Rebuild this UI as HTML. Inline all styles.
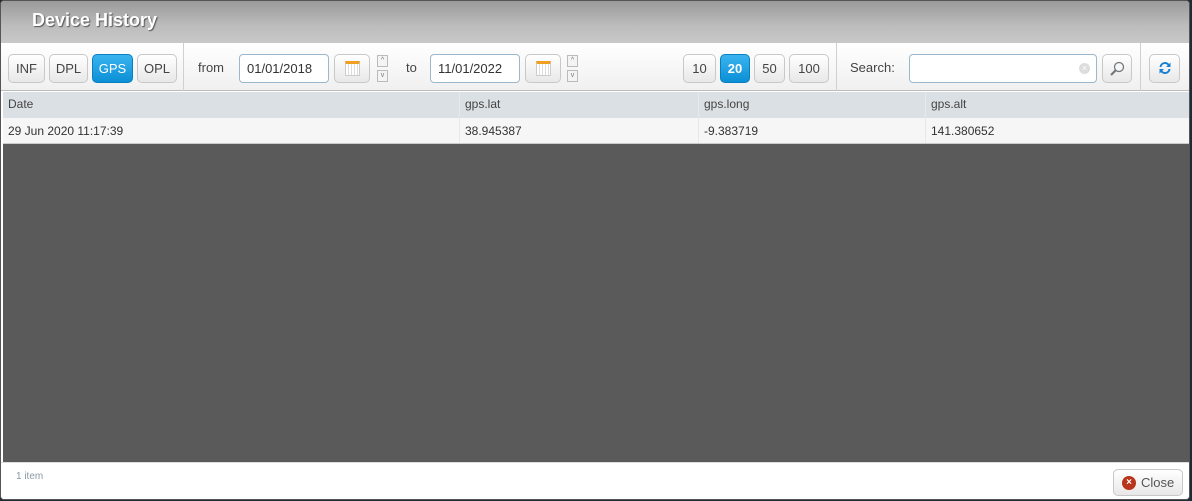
<!DOCTYPE html>
<html><head><style>
*{box-sizing:border-box;margin:0;padding:0}
body{width:1192px;height:501px;background:#1e2a36;font-family:"Liberation Sans",sans-serif;font-size:12px;color:#333;overflow:hidden;position:relative}
.win{position:absolute;left:0;top:0;width:1190px;height:500px;background:#fff;border-radius:4px;overflow:hidden;border:1px solid #555}
.title{height:42px;background:linear-gradient(#9a9a9a,#bdbdbd 60%,#c8c8c8);color:#fff;font-weight:bold;font-size:18px;padding:9px 0 0 31px;text-shadow:1px 1px 1px #555}
.tb{position:absolute;top:42px;left:0;width:1190px;height:48px;background:linear-gradient(#fff,#f0f0f0);border-bottom:1px solid #bbb}
.b{position:absolute;top:11px;height:29px;border:1px solid #c8c8c8;border-radius:5px;background:linear-gradient(#fff,#e8e8e8);text-align:center;line-height:27px;font-size:13px;color:#444}
.on{background:linear-gradient(#3bb4f0,#0b8fd6);color:#fff;border-color:#0a7fc0;font-weight:bold}
.sep{position:absolute;top:0;width:1px;height:48px;background:#d0d0d0}
.lbl{position:absolute;top:17px;font-size:13px;color:#444}
.in{position:absolute;top:11px;height:29px;border:1px solid #9ab8cc;border-radius:4px;background:#fff;padding-left:7px;line-height:27px;font-size:13px;color:#333}
.sp{position:absolute;width:11px;height:12px;border:1px solid #bbb;background:#f4f4f4;font-size:7px;line-height:10px;text-align:center;color:#777}
.cal{position:absolute;top:6px;left:10px;width:15px;height:15px;background:repeating-linear-gradient(90deg,#fff 0 2px,#ddd 2px 3px);border:1px solid #ccc;border-top:3px solid #f0a020}
.grid{position:absolute;top:91px;left:2px;width:1187px;height:370px;background:#5a5a5a}
.hd,.row{position:absolute;left:0;width:1187px;font-size:12px}
.hd{top:0;height:26px;background:#dbe0e4;line-height:25px;color:#444}
.row{top:26px;height:26px;background:#f6f6f6;line-height:26px;color:#333;border-bottom:1px solid #ccc}
.c{position:absolute;top:0;padding-left:5px;height:100%;border-left:1px solid #e8e8e8}
.ft{position:absolute;top:461px;left:0;width:1190px;height:39px;background:#fff;border-top:1px solid #ddd}
</style></head><body><div class="win">
<div class="title">Device History</div>
<div class="tb">
<div class="b" style="left:7px;width:37px">INF</div>
<div class="b" style="left:48px;width:39px">DPL</div>
<div class="b on" style="left:91px;width:41px;font-weight:normal">GPS</div>
<div class="b" style="left:136px;width:40px">OPL</div>
<div class="sep" style="left:182px"></div>
<div class="lbl" style="left:197px">from</div>
<div class="in" style="left:238px;width:90px">01/01/2018</div>
<div class="b" style="left:333px;width:36px"><div class="cal"></div></div>
<div class="sp" style="left:376px;top:12px">^</div><div class="sp" style="left:376px;top:27px">v</div>
<div class="lbl" style="left:405px">to</div>
<div class="in" style="left:429px;width:90px">11/01/2022</div>
<div class="b" style="left:524px;width:36px"><div class="cal"></div></div>
<div class="sp" style="left:566px;top:12px">^</div><div class="sp" style="left:566px;top:27px">v</div>
<div class="b" style="left:682px;width:33px">10</div>
<div class="b on" style="left:719px;width:30px">20</div>
<div class="b" style="left:753px;width:31px">50</div>
<div class="b" style="left:788px;width:40px">100</div>
<div class="sep" style="left:835px"></div>
<div class="lbl" style="left:849px">Search:</div>
<div class="in" style="left:908px;width:188px"><span style="position:absolute;right:6px;top:8px;width:11px;height:11px;border-radius:50%;background:#ddd;color:#fff;font-size:9px;line-height:11px;text-align:center">×</span></div>
<div class="b" style="left:1101px;width:30px"><svg width="18" height="18" viewBox="0 0 18 18" style="margin-top:5px"><circle cx="11" cy="7" r="4.5" fill="#f4f8fb" stroke="#777" stroke-width="1.3"/><path d="M8 10L3 15" stroke="#777" stroke-width="2.2"/></svg></div>
<div class="sep" style="left:1139px"></div>
<div class="b" style="left:1148px;width:31px"><svg width="14" height="14" viewBox="0 0 14 14" style="margin-top:6px"><path d="M2.5 6A4.5 4.5 0 0 1 11 4.5M11.5 8A4.5 4.5 0 0 1 3 9.5" fill="none" stroke="#1a7fd0" stroke-width="2"/><path d="M12.5 1.5V6H8z M1.5 12.5V8H6z" fill="#1a7fd0"/></svg></div>
</div>
<div class="grid">
<div class="hd"><div class="c" style="left:0;border:0">Date</div><div class="c" style="left:456px">gps.lat</div><div class="c" style="left:695px">gps.long</div><div class="c" style="left:922px">gps.alt</div></div>
<div class="row"><div class="c" style="left:0;border:0">29 Jun 2020 11:17:39</div><div class="c" style="left:456px">38.945387</div><div class="c" style="left:695px">-9.383719</div><div class="c" style="left:922px">141.380652</div></div>
</div>
<div class="ft">
<div style="position:absolute;left:15px;top:8px;font-size:10px;color:#8a9aa6">1 item</div>
<div class="b" style="left:1112px;top:6px;width:70px;height:27px;line-height:25px;font-size:13px;color:#555;text-align:left;padding-left:27px"><span style="position:absolute;left:8px;top:6px;width:14px;height:14px;border-radius:50%;background:#b8341a;color:#fff;font-size:10px;line-height:14px;text-align:center;font-weight:bold">×</span>Close</div>
</div>
</div></body></html>
